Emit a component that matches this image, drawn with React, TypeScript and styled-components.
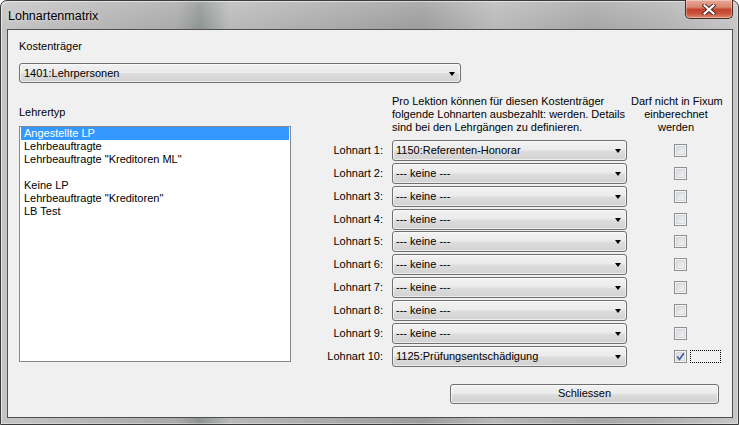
import React from "react";
import styled, { createGlobalStyle } from "styled-components";

const Global = createGlobalStyle`
  html, body { margin: 0; padding: 0; background: #ffffff; }
  body { font-family: "Liberation Sans", Arial, sans-serif; }
  * { box-sizing: border-box; }
`;

const Window = styled.div`
  width: 739px;
  height: 425px;
  border: 1px solid #3b3b3b;
  border-radius: 7px 7px 0 0;
  padding: 0 5px 6px 6px;
  display: flex;
  flex-direction: column;
  background:
    linear-gradient(180deg, rgba(255,255,255,0.18) 0px, rgba(255,255,255,0) 28px),
    linear-gradient(90deg, #c4c4c4 0%, #b3b3b3 15%, #a9a9a9 24%, #8d9492 27%, #b9b9b9 31%, #ababab 44%, #9c9c9c 57%, #b9b9b9 67%, #a6a6a6 80%, #b2b2b2 90%, #c6c6c6 100%);
  box-shadow: inset 1px 1px 0 rgba(255,255,255,0.55), inset -1px -1px 0 rgba(255,255,255,0.35);
`;

const TitleBar = styled.div`
  height: 28px;
  display: flex;
  justify-content: space-between;
  align-items: flex-start;
`;

const Title = styled.div`
  margin: 8px 0 0 1px;
  font-size: 12.5px;
  line-height: 14px;
  color: #000;
  text-shadow: 0 0 5px rgba(255,255,255,0.7);
`;

const CloseButton = styled.div`
  width: 48px;
  height: 19px;
  margin-top: -1px;
  border: 1px solid #4e2a24;
  border-top: none;
  border-radius: 0 0 5px 5px;
  display: flex;
  align-items: center;
  justify-content: center;
  background: linear-gradient(180deg, #e8a797 0%, #d98670 40%, #c5432c 52%, #c9533a 75%, #dd8a6d 100%);
  box-shadow: inset 0 0 0 1px rgba(255,255,255,0.35);
`;

const Client = styled.div`
  flex: 1;
  border: 1px solid #4f4f4f;
  background: #f0f0f0;
  display: flex;
  flex-direction: column;
  padding: 10px 13px 0 11px;
  font-size: 11px;
  color: #000;
`;

const Label = styled.div`
  font-size: 11px;
  line-height: 13px;
  white-space: nowrap;
`;

const ComboWrap = styled.div`
  margin-top: 10px;
`;

const Combo = styled.div<{ $w: number }>`
  width: ${(p) => p.$w}px;
  height: ${(p) => (p.$w > 300 ? 20 : 21)}px;
  border: 1px solid #707070;
  border-radius: 3px;
  background: linear-gradient(180deg, #f2f2f2 0%, #ebebeb 48%, #dddddd 52%, #d2d2d2 100%);
  box-shadow: inset 0 0 0 1px rgba(255,255,255,0.6);
  display: flex;
  align-items: center;
  padding: 0 5px 0 ${(p) => (p.$w > 300 ? 4 : 3)}px;
  font-size: 11px;
  line-height: 13px;
  white-space: nowrap;
  flex-shrink: 0;
`;

const ComboText = styled.span`
  flex: 1;
`;

const Arrow = styled.span`
  width: 0;
  height: 0;
  border-left: 3.5px solid transparent;
  border-right: 3.5px solid transparent;
  border-top: 4px solid #000;
  margin-top: 1px;
`;

const Body = styled.div`
  margin-top: 12px;
  display: flex;
  align-items: flex-start;
`;

const LeftCol = styled.div`
  width: 272px;
  flex-shrink: 0;
  padding-top: 11px;
  display: flex;
  flex-direction: column;
`;

const ListBox = styled.div`
  margin-top: 7px;
  height: 236px;
  background: #fff;
  border: 1px solid #828790;
  padding: 0 1px;
`;

const ListItem = styled.div<{ $selected?: boolean }>`
  height: 13px;
  line-height: 13px;
  padding-left: 3px;
  font-size: 11px;
  white-space: nowrap;
  color: ${(p) => (p.$selected ? "#fff" : "#000")};
  background: ${(p) => (p.$selected ? "#3399ff" : "transparent")};
`;

const RightCol = styled.div`
  margin-left: 30px;
  display: flex;
  flex-direction: column;
`;

const HeaderRow = styled.div`
  display: flex;
  margin-bottom: 6px;
`;

const Description = styled.div`
  margin-left: 71px;
  width: 235px;
  font-size: 11px;
  line-height: 13px;
  white-space: nowrap;
`;

const FixumHeader = styled.div`
  margin-left: 4px;
  width: 90px;
  text-align: center;
  font-size: 11px;
  line-height: 13px;
  white-space: nowrap;
`;

const Rows = styled.div`
  display: flex;
  flex-direction: column;
  gap: 1.85px;
`;

const Row = styled.div`
  display: flex;
  align-items: center;
`;

const RowLabel = styled.div`
  width: 62px;
  margin-right: 9px;
  text-align: right;
  font-size: 11px;
  line-height: 13px;
  white-space: nowrap;
`;

const CheckCell = styled.div`
  margin-left: 4px;
  width: 90px;
  padding-left: 43px;
  display: flex;
  align-items: center;
`;

const CheckBox = styled.span`
  width: 13px;
  height: 13px;
  border: 1px solid #8e8f8f;
  background: linear-gradient(135deg, #d0d3d8 0%, #e9eaec 60%, #f7f7f7 100%);
  box-shadow: inset 0 0 0 1px #f4f4f4, inset 0 0 0 2px #d6d8db;
  display: flex;
  align-items: center;
  justify-content: center;
`;

const FocusRect = styled.span`
  margin-left: 3px;
  width: 31px;
  height: 13px;
  border: 1px dotted #000;
`;

const Footer = styled.div`
  margin-top: 17px;
  display: flex;
  justify-content: flex-end;
`;

const Button = styled.div`
  width: 269px;
  height: 20px;
  border: 1px solid #707070;
  border-radius: 3px;
  background: linear-gradient(180deg, #f2f2f2 0%, #ebebeb 48%, #dddddd 52%, #cfcfcf 100%);
  box-shadow: inset 0 0 0 1px rgba(255,255,255,0.65);
  display: flex;
  align-items: center;
  justify-content: center;
  font-size: 11px;
  line-height: 13px;
`;

const lehrertypen = [
  "Angestellte LP",
  "Lehrbeauftragte",
  'Lehrbeauftragte "Kreditoren ML"',
  "",
  "Keine LP",
  'Lehrbeauftragte "Kreditoren"',
  "LB Test",
];

const lohnarten = [
  "1150:Referenten-Honorar",
  "--- keine ---",
  "--- keine ---",
  "--- keine ---",
  "--- keine ---",
  "--- keine ---",
  "--- keine ---",
  "--- keine ---",
  "--- keine ---",
  "1125:Prüfungsentschädigung",
];

function CloseGlyph() {
  return (
    <svg width="14" height="11" viewBox="0 0 14 11">
      <path d="M2.5 1.5 L11.5 9.5 M11.5 1.5 L2.5 9.5" stroke="#4a2a24" strokeWidth="4" strokeLinecap="square" />
      <path d="M2.5 1.5 L11.5 9.5 M11.5 1.5 L2.5 9.5" stroke="#ffffff" strokeWidth="2.2" strokeLinecap="square" />
    </svg>
  );
}

function Tick() {
  return (
    <svg width="9" height="9" viewBox="0 0 9 9">
      <path d="M1.2 4.6 L3.5 7.4 L7.8 1.2" stroke="#3a57a8" strokeWidth="1.6" fill="none" />
    </svg>
  );
}

function Dropdown({ w, text }: { w: number; text: string }) {
  return (
    <Combo $w={w}>
      <ComboText>{text}</ComboText>
      <Arrow />
    </Combo>
  );
}

export default function App() {
  return (
    <>
      <Global />
      <Window>
        <TitleBar>
          <Title>Lohnartenmatrix</Title>
          <CloseButton>
            <CloseGlyph />
          </CloseButton>
        </TitleBar>
        <Client>
          <Label>Kostenträger</Label>
          <ComboWrap>
            <Dropdown w={442} text="1401:Lehrpersonen" />
          </ComboWrap>
          <Body>
            <LeftCol>
              <Label>Lehrertyp</Label>
              <ListBox>
                {lehrertypen.map((t, i) => (
                  <ListItem key={i} $selected={i === 0}>
                    {t}
                  </ListItem>
                ))}
              </ListBox>
            </LeftCol>
            <RightCol>
              <HeaderRow>
                <Description>
                  Pro Lektion können für diesen Kostenträger
                  <br />
                  folgende Lohnarten ausbezahlt: werden. Details
                  <br />
                  sind bei den Lehrgängen zu definieren.
                </Description>
                <FixumHeader>
                  Darf nicht in Fixum
                  <br />
                  einberechnet
                  <br />
                  werden
                </FixumHeader>
              </HeaderRow>
              <Rows>
                {lohnarten.map((l, i) => (
                  <Row key={i}>
                    <RowLabel>Lohnart {i + 1}:</RowLabel>
                    <Dropdown w={235} text={l} />
                    <CheckCell>
                      <CheckBox>{i === 9 && <Tick />}</CheckBox>
                      {i === 9 && <FocusRect />}
                    </CheckCell>
                  </Row>
                ))}
              </Rows>
            </RightCol>
          </Body>
          <Footer>
            <Button>Schliessen</Button>
          </Footer>
        </Client>
      </Window>
    </>
  );
}
